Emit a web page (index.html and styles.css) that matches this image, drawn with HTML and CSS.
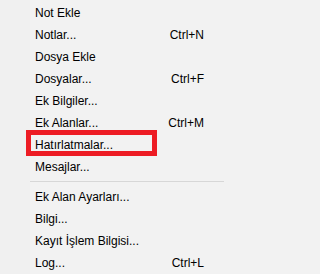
FILE: index.html
```html
<!DOCTYPE html>
<html lang="tr">
<head>
<meta charset="utf-8">
<link rel="stylesheet" href="styles.css">
</head>
<body>
<div class="menu">
  <div class="item"><span class="label">Not Ekle</span></div>
  <div class="item"><span class="label">Notlar...</span><span class="key">Ctrl+N</span></div>
  <div class="item"><span class="label">Dosya Ekle</span></div>
  <div class="item"><span class="label">Dosyalar...</span><span class="key">Ctrl+F</span></div>
  <div class="item"><span class="label">Ek Bilgiler...</span></div>
  <div class="item"><span class="label">Ek Alanlar...</span><span class="key">Ctrl+M</span></div>
  <div class="item highlighted"><span class="label">Hatırlatmalar...</span><span class="mark"></span></div>
  <div class="item"><span class="label">Mesajlar...</span></div>
  <div class="separator"></div>
  <div class="item"><span class="label">Ek Alan Ayarları...</span></div>
  <div class="item"><span class="label">Bilgi...</span></div>
  <div class="item"><span class="label">Kayıt İşlem Bilgisi...</span></div>
  <div class="item"><span class="label">Log...</span><span class="key">Ctrl+L</span></div>
</div>
</body>
</html>
```
FILE: styles.css
```css
html, body {
  margin: 0;
  padding: 0;
  background: #f2f2f2;
}
body {
  font-family: "Liberation Sans", Arial, sans-serif;
  font-size: 12px;
  color: #000;
}
.menu {
  width: 224px;
  height: 274px;
  padding-top: 2px;
  box-sizing: border-box;
  background: linear-gradient(to right, #f0f0f0 30px, #f2f2f2 30px);
}
.item {
  position: relative;
  display: flex;
  justify-content: space-between;
  align-items: center;
  height: 22px;
  line-height: 22px;
  padding: 0 20px 0 35px;
  white-space: nowrap;
}
.key {
  text-align: right;
}
.mark {
  position: absolute;
  left: 26px;
  top: -4px;
  width: 131px;
  height: 26px;
  border: 5px solid #ed1c24;
  box-sizing: border-box;
}
.separator {
  height: 1px;
  margin: 3px 0 4px 30px;
  background: #d7d7d7;
}
```
